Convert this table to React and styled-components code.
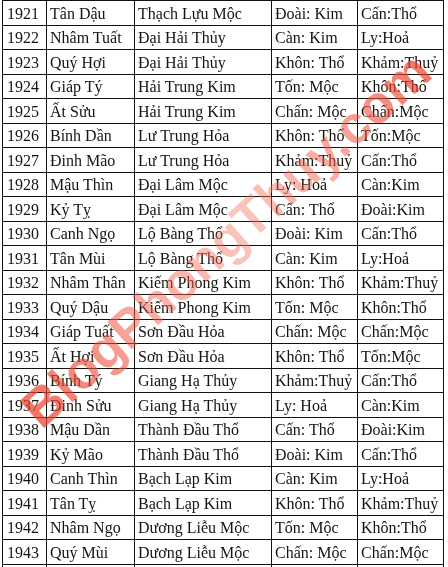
import React from 'react'
import styled, { createGlobalStyle } from 'styled-components'

const GlobalStyle = createGlobalStyle`
  html, body {
    margin: 0;
    padding: 0;
    background: #fff;
    overflow: hidden;
  }
`

const rows = [
  ['1921', 'Tân Dậu', 'Thạch Lựu Mộc', 'Đoài: Kim', 'Cấn:Thổ'],
  ['1922', 'Nhâm Tuất', 'Đại Hải Thủy', 'Càn: Kim', 'Ly:Hoả'],
  ['1923', 'Quý Hợi', 'Đại Hải Thủy', 'Khôn: Thổ', 'Khảm:Thuỷ'],
  ['1924', 'Giáp Tý', 'Hải Trung Kim', 'Tốn: Mộc', 'Khôn:Thổ'],
  ['1925', 'Ất Sửu', 'Hải Trung Kim', 'Chấn: Mộc', 'Chấn:Mộc'],
  ['1926', 'Bính Dần', 'Lư Trung Hỏa', 'Khôn: Thổ', 'Tốn:Mộc'],
  ['1927', 'Đinh Mão', 'Lư Trung Hỏa', 'Khảm:Thuỷ', 'Cấn:Thổ'],
  ['1928', 'Mậu Thìn', 'Đại Lâm Mộc', 'Ly: Hoả', 'Càn:Kim'],
  ['1929', 'Kỷ Tỵ', 'Đại Lâm Mộc', 'Cấn: Thổ', 'Đoài:Kim'],
  ['1930', 'Canh Ngọ', 'Lộ Bàng Thổ', 'Đoài: Kim', 'Cấn:Thổ'],
  ['1931', 'Tân Mùi', 'Lộ Bàng Thổ', 'Càn: Kim', 'Ly:Hoả'],
  ['1932', 'Nhâm Thân', 'Kiếm Phong Kim', 'Khôn: Thổ', 'Khảm:Thuỷ'],
  ['1933', 'Quý Dậu', 'Kiếm Phong Kim', 'Tốn: Mộc', 'Khôn:Thổ'],
  ['1934', 'Giáp Tuất', 'Sơn Đầu Hỏa', 'Chấn: Mộc', 'Chấn:Mộc'],
  ['1935', 'Ất Hợi', 'Sơn Đầu Hỏa', 'Khôn: Thổ', 'Tốn:Mộc'],
  ['1936', 'Bính Tý', 'Giang Hạ Thủy', 'Khảm:Thuỷ', 'Cấn:Thổ'],
  ['1937', 'Đinh Sửu', 'Giang Hạ Thủy', 'Ly: Hoả', 'Càn:Kim'],
  ['1938', 'Mậu Dần', 'Thành Đầu Thổ', 'Cấn: Thổ', 'Đoài:Kim'],
  ['1939', 'Kỷ Mão', 'Thành Đầu Thổ', 'Đoài: Kim', 'Cấn:Thổ'],
  ['1940', 'Canh Thìn', 'Bạch Lạp Kim', 'Càn: Kim', 'Ly:Hoả'],
  ['1941', 'Tân Tỵ', 'Bạch Lạp Kim', 'Khôn: Thổ', 'Khảm:Thuỷ'],
  ['1942', 'Nhâm Ngọ', 'Dương Liễu Mộc', 'Tốn: Mộc', 'Khôn:Thổ'],
  ['1943', 'Quý Mùi', 'Dương Liễu Mộc', 'Chấn: Mộc', 'Chấn:Mộc'],
]

// the next row of the table only shows its borders at the bottom edge
const filler = ['', '', '', '', '']

const Page = styled.div`
  position: relative;
  width: 448px;
  height: 567px;
  overflow: hidden;
  background: #fff;
`

const Table = styled.div`
  display: grid;
  grid-template-columns: 44px 88px 137px 86px 86px;
  grid-auto-rows: 24.5px;
  margin-left: 2px;
  width: max-content;
  border-left: 1px solid #111;
  border-top: 1px solid #111;
  font-family: "Liberation Serif", "Times New Roman", serif;
  font-size: 16px;
  color: #161410;
`

const Cell = styled.div`
  display: flex;
  align-items: center;
  padding: 2px 0 0 ${p => (p.$year ? '4px' : '3px')};
  border-right: 1px solid #111;
  border-bottom: 1px solid #111;
  white-space: nowrap;
  overflow: hidden;
  line-height: 1;
`

const Text = styled.span`
  display: inline-block;
  transform: scaleY(1.08);
  transform-origin: 50% 60%;
`

const Watermark = styled.div`
  position: absolute;
  left: 226px;
  top: 240px;
  transform: translate(-50%, -50%) rotate(-42deg);
  font-family: "Liberation Sans", Arial, sans-serif;
  font-weight: 700;
  font-size: 53px;
  line-height: 1.1;
  white-space: nowrap;
  color: transparent;
  background: linear-gradient(
    90deg,
    rgba(236, 60, 40, 0.72) 0%,
    rgba(240, 95, 75, 0.5) 30%,
    rgba(244, 120, 100, 0.42) 55%,
    rgba(240, 90, 70, 0.55) 80%,
    rgba(236, 60, 40, 0.7) 100%
  );
  -webkit-background-clip: text;
  background-clip: text;
  pointer-events: none;
`

export default function App() {
  return (
    <Page>
      <GlobalStyle />
      <Table>
        {[...rows, filler].map((r, ri) =>
          r.map((text, i) => (
            <Cell key={ri + '-' + i} $year={i === 0}>
              {text && <Text>{text}</Text>}
            </Cell>
          ))
        )}
      </Table>
      <Watermark>BlogPhongThuy.com</Watermark>
    </Page>
  )
}
